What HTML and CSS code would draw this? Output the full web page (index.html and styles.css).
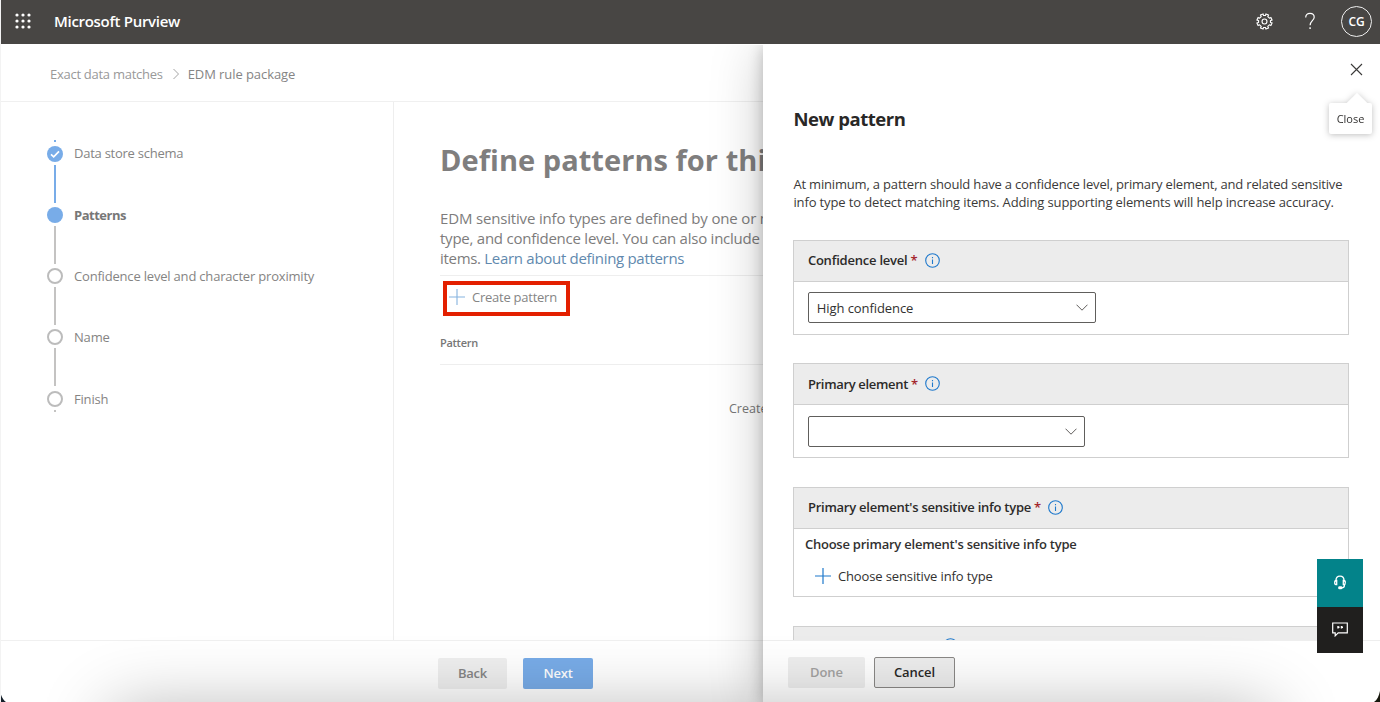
FILE: index.html
```html
<!DOCTYPE html>
<html lang="en">
<head>
<meta charset="utf-8">
<title>Microsoft Purview</title>
<link rel="stylesheet" href="styles.css">
</head>
<body>
<div class="app">
  <header class="topbar">
    <svg class="waffle" width="16" height="16" viewBox="0 0 16 16" fill="#fff"><circle cx="2" cy="2" r="1.6"/><circle cx="8" cy="2" r="1.6"/><circle cx="14" cy="2" r="1.6"/><circle cx="2" cy="8" r="1.6"/><circle cx="8" cy="8" r="1.6"/><circle cx="14" cy="8" r="1.6"/><circle cx="2" cy="14" r="1.6"/><circle cx="8" cy="14" r="1.6"/><circle cx="14" cy="14" r="1.6"/></svg>
    <span class="brand">Microsoft Purview</span>
    <svg class="gear" width="18" height="18" viewBox="0 0 18 18" fill="none" stroke="#fff" stroke-width="1.2" stroke-linejoin="round"><path d="M7.500 1l.5 1.700h2L10.500 1l2.800 1.200-.8 1.600 1.700 1.700 1.600-.8L17 7.500l-1.700.5v2l1.700.5-1.200 2.800-1.600-.8-1.700 1.700.8 1.600L10.500 17l-.5-1.700H8L7.500 17l-2.800-1.200.8-1.600-1.700-1.700-1.600.8L1 10.500 2.700 10V8L1 7.500l1.200-2.800 1.600.8 1.700-1.700-.8-1.600z"/><circle cx="9" cy="9" r="2.600"/></svg>
    <svg class="help" width="12" height="18" viewBox="0 0 12 18" fill="none" stroke="#fff" stroke-width="1.2"><path d="M1.700 5.500C1.700 2.900 3.400 1.300 6 1.300s4.200 1.500 4.200 3.900c0 3.200-4.100 3.900-4.100 8"/><path d="M6.100 15.300v1.700" stroke-width="1.400"/></svg>
    <span class="avatar">CG</span>
  </header>
  <nav class="crumbs">
    <span class="crumb">Exact data matches</span>
    <svg width="8" height="12" viewBox="0 0 8 12" fill="none" stroke="#a5a5a5"><path d="M1.500 1l5 5-5 5"/></svg>
    <span class="current">EDM rule package</span>
  </nav>
  <div class="body">
    <aside class="steps">
      <div class="cap done"></div>
      <div class="step"><span class="dot full"><svg width="16" height="16" viewBox="0 0 16 16" fill="none" stroke="#fff" stroke-width="1.700"><path d="M4 8.300l2.700 2.500L12 5.300"/></svg></span><span class="schema">Data store schema</span></div>
      <div class="line done"></div>
      <div class="step"><span class="dot full"></span><b>Patterns</b></div>
      <div class="line"></div>
      <div class="step"><span class="dot"></span><span>Confidence level and character proximity</span></div>
      <div class="line"></div>
      <div class="step"><span class="dot"></span><span>Name</span></div>
      <div class="line"></div>
      <div class="step"><span class="dot"></span><span>Finish</span></div>
      <div class="cap end"></div>
    </aside>
    <main class="main">
      <h1>Define patterns for this</h1>
      <p class="intro"><span class="i1">EDM sensitive info types are defined by one or more</span><br><span class="i2">type, and confidence level. You can also include</span><br><span class="i3">items. <a>Learn about defining patterns</a></span></p>
      <div class="toolbar"><div class="create"><svg width="16" height="16" viewBox="0 0 16 16" fill="none" stroke="#86b3df" stroke-width="1.100"><path d="M8 0v16M0 8h16"/></svg><span>Create pattern</span></div></div>
      <div class="colhead">Pattern</div>
      <div class="empty">Create</div>
    </main>
  </div>
  <footer class="foot"><span class="btn back">Back</span><span class="btn next">Next</span></footer>

  <section class="drawer">
    <svg class="x" width="13" height="13" viewBox="0 0 13 13" fill="none" stroke="#3b3a39" stroke-width="1.100"><path d="M1 1l11 11M12 1L1 12"/></svg>
    <div class="tip">Close</div>
    <div class="scroll">
      <h2>New pattern</h2>
      <p class="desc"><span class="d1">At minimum, a pattern should have a confidence level, primary element, and related sensitive</span><br><span class="d2">info type to detect matching items. Adding supporting elements will help increase accuracy.</span></p>
      <div class="card">
        <div class="chead"><span class="c1">Confidence level</span><i>*</i><svg class="info" width="15" height="15" viewBox="0 0 15 15" fill="none" stroke="#1f79cc" stroke-width="1.100"><circle cx="7.500" cy="7.500" r="6.800"/><path d="M7.500 6.500v4.500M7.500 4v1.300"/></svg></div>
        <div class="cbody"><div class="select wide"><span>High confidence</span><svg width="12" height="7" viewBox="0 0 12 7" fill="none" stroke="#605e5c"><path d="M.500.700L6 6.200 11.500.700"/></svg></div></div>
      </div>
      <div class="card">
        <div class="chead"><span class="c2">Primary element</span><i>*</i><svg class="info" width="15" height="15" viewBox="0 0 15 15" fill="none" stroke="#1f79cc" stroke-width="1.100"><circle cx="7.500" cy="7.500" r="6.800"/><path d="M7.500 6.500v4.500M7.500 4v1.300"/></svg></div>
        <div class="cbody"><div class="select"><span></span><svg width="12" height="7" viewBox="0 0 12 7" fill="none" stroke="#605e5c"><path d="M.500.700L6 6.200 11.500.700"/></svg></div></div>
      </div>
      <div class="card">
        <div class="chead"><span class="c3">Primary element's sensitive info type</span><i>*</i><svg class="info" width="15" height="15" viewBox="0 0 15 15" fill="none" stroke="#1f79cc" stroke-width="1.100"><circle cx="7.500" cy="7.500" r="6.800"/><path d="M7.500 6.500v4.500M7.500 4v1.300"/></svg></div>
        <div class="choose"><b>Choose primary element's sensitive info type</b><div class="pick"><svg width="16" height="16" viewBox="0 0 16 16" fill="none" stroke="#1f79cc" stroke-width="1.200"><path d="M8 0v16M0 8h16"/></svg><span>Choose sensitive info type</span></div></div>
      </div>
      <div class="card">
        <div class="chead last"><span>Supporting elements</span><svg class="info" width="15" height="15" viewBox="0 0 15 15" fill="none" stroke="#1f79cc" stroke-width="1.100"><circle cx="7.500" cy="7.500" r="6.800"/></svg></div>
      </div>
    </div>
    <div class="actions"><span class="btn off">Done</span><span class="btn cancel">Cancel</span></div>
  </section>
  <div class="shade"></div>
  <div class="dock">
    <div class="support"><svg width="14" height="15" viewBox="0 0 14 15" fill="none" stroke="#fff" stroke-width="1.300"><path d="M3 7V5.500C3 3 4.500 1.200 7 1.200S11 3 11 5.500V7"/><path d="M3.700 5.500v4.200H3C1.800 9.700 1.700 8.800 1.700 7.600S1.900 5.500 3 5.500zM10.300 5.500v4.200h.7c1.200 0 1.300-.9 1.300-2.100S12.100 5.500 11 5.500z"/><path d="M11.500 9.700c0 2-.9 3.200-3 3.200"/><rect x="5.800" y="12" width="3" height="1.700" rx=".8" fill="#fff"/></svg></div>
    <div class="feedback"><svg width="16" height="15" viewBox="0 0 16 15" fill="none" stroke="#fff" stroke-width="1.200"><path d="M.7 1h14.600v9.800H6.200l-3 3v-3H.7z"/><path d="M5.500 5.200h2M9 5.200h2M6 4v2.600M9.500 4v2.600" stroke-width="1.400"/></svg></div>
  </div>
  <svg class="corner left" width="8" height="12" viewBox="0 0 8 12"><path d="M0 1c1 5 3 9 6 11H0z" fill="#15202b"/></svg>
  <svg class="corner right" width="8" height="12" viewBox="0 0 8 12"><path d="M8 1c-1 5-3 9-6 11h6z" fill="#17180d"/></svg>
</div>
</body>
</html>
```
FILE: styles.css
```css
* { box-sizing: border-box; }
body { margin: 0; font-family: "Open Sans", "Noto Sans", sans-serif; font-size: 13px; color: #323130; }
.app { position: relative; width: 1380px; height: 702px; overflow: hidden; background: #fff; display: flex; flex-direction: column; white-space: nowrap; border-left: 1px solid #f3f3f3; }
svg { display: block; flex: none; }
.topbar { height: 44px; margin-left: -1px; flex: none; background: #484644; color: #fff; display: flex; align-items: center; padding: 0 8px 2px 15px; }
.brand { margin-left: 23px; font-size: 15px; font-weight: 600; letter-spacing: -.3px; flex: 1; }
.help { margin-left: 31px; }
.gear { width: 17px; height: 17px; }
.avatar { margin-left: 25px; width: 31px; height: 31px; border: 1px solid #eee; border-radius: 50%; display: flex; align-items: center; justify-content: center; font-size: 12px; font-weight: 600; letter-spacing: -.2px; }
.crumbs { height: 58px; flex: none; border-bottom: 1px solid #f0f0f0; padding: 2px 0 0 49px; display: flex; align-items: center; color: #999; }
.crumb { letter-spacing: -.27px; }
.crumbs svg { margin: 0 8px 0 9px; }
.crumbs .current { color: #858585; letter-spacing: -.07px; }
.body { height: 538px; flex: none; display: flex; }
.steps { width: 393px; border-right: 1px solid #eee; padding: 38px 0 0 46px; color: #858483; letter-spacing: -.19px; }
.step { height: 16px; display: flex; align-items: center; gap: 11px; line-height: 18px; }
.step > :last-child { margin-top: -.4px; }
.step b { color: #777; letter-spacing: -.5px; }
.schema { letter-spacing: -.25px; }
.dot { width: 16px; height: 16px; border-radius: 50%; border: 2px solid #bcbcbc; flex: none; }
.dot.full { background: #78ace8; border: 0; }
.line { width: 2px; height: 38px; background: #c4c3c2; margin: 3px 0 4.3px 7px; }
.line.done, .cap.done { background: #78ace8; }
.cap { width: 2px; height: 2px; margin: 0 0 3.500px 7px; background: #c4c3c2; }
.cap.end { margin-top: 3.500px; }
.main { padding: 38px 0 0 46px; flex: 1; }
h1 { margin: 0; font-size: 29px; line-height: 40px; font-weight: 700; color: #7f7e7e; letter-spacing: .05px; }
.intro { margin: 28px 0 0; font-size: 15px; line-height: 20px; color: #7d7c7c; height: 68px; border-bottom: 1px solid #eee; }
.intro a { color: #6189ae; }
.i1 { letter-spacing: -.17px; }
.i2 { letter-spacing: -.24px; }
.i3 { letter-spacing: -.3px; }
.toolbar { padding: 5px 0 0 3px; }
.create { width: 127px; height: 35px; border: 4px solid #e32000; display: flex; align-items: center; padding: 0 0 3px 2px; gap: 7px; color: #858585; letter-spacing: -.25px; }
.colhead { height: 49px; padding: 18px 0 0; font-size: 11px; line-height: 18px; font-weight: 600; color: #777; border-bottom: 1px solid #eee; letter-spacing: -.3px; }
.empty { padding: 34px 0 0 289px; font-size: 12.500px; line-height: 20px; color: #777; }
.foot { height: 62px; flex: none; border-top: 1px solid #f0f0f0; padding: 17px 0 0 437px; display: flex; gap: 16px; }
.btn { height: 31px; border-radius: 2px; display: flex; align-items: center; justify-content: center; font-size: 13px; font-weight: 600; padding-bottom: 1px; }
.back { width: 69px; background: #efefef; color: #858585; letter-spacing: -.2px; }
.next { width: 70px; background: #78ace8; color: #fff; letter-spacing: -.2px; }
.drawer { position: absolute; left: 762px; top: 45px; width: 617px; height: 657px; background: #fff; box-shadow: 0 6px 50px rgba(0,0,0,.22), 0 2px 14px rgba(0,0,0,.22); clip-path: inset(0 0 0 -80px); display: flex; flex-direction: column; }
.x { position: absolute; right: 17px; top: 18px; }
.tip { position: absolute; right: 8px; top: 58px; width: 43px; height: 31px; background: #fff; border-radius: 2px; display: flex; align-items: center; justify-content: center; font-size: 11px; filter: drop-shadow(0 1px 3px rgba(0,0,0,.25)); }
.tip::before { content: ""; position: absolute; left: 20px; top: -7px; width: 16px; height: 16px; background: #fff; transform: rotate(45deg); }
.scroll { height: 596px; flex: none; overflow: hidden; padding: 60px 31px 0 30.400px; border-bottom: 1px solid #eee; }
h2 { margin: 0; font-size: 18.500px; line-height: 28px; font-weight: 700; color: #292827; letter-spacing: -.45px; }
.desc { margin: 42px 0 27.700px; font-size: 13px; line-height: 18.400px; color: #3b3a39; }
.d1 { letter-spacing: -.18px; }
.d2 { letter-spacing: -.13px; }
.card { border: 1px solid #cfcfcf; margin-bottom: 28.700px; }
.chead { height: 41px; background: #ececec; border-bottom: 1px solid #cfcfcf; padding: 0 0 1px 13.500px; display: flex; align-items: center; font-weight: 600; color: #2b2a29; }
.chead i { font-style: normal; color: #a4262c; margin: 0 7px 0 3px; }
.c1 { letter-spacing: -.22px; }
.c2 { letter-spacing: -.33px; }
.c3 { letter-spacing: -.24px; }
.last { padding-bottom: 2px; }
.last span { letter-spacing: -.2px; }
.last .info { margin-left: 8px; }
.cbody { height: 52px; padding: 10.700px 0 0 13.400px; }
.select { width: 277px; height: 31px; border: 1px solid #605e5c; border-radius: 2px; display: flex; align-items: center; justify-content: space-between; padding: 0 7px 0 8px; letter-spacing: -.08px; }
.select.wide { width: 288px; }
.choose { height: 67px; padding: 6px 0 0 10.500px; line-height: 18px; }
.choose b { font-weight: 600; display: block; letter-spacing: -.23px; }
.pick { display: flex; align-items: center; gap: 7px; padding: 14px 0 0 10px; letter-spacing: -.12px; }
.actions { padding: 16px 0 0 25px; display: flex; gap: 9px; align-items: flex-start; letter-spacing: -.1px; }
.off { width: 77px; background: #eeeeee; color: #a3a2a1; }
.cancel { width: 81px; background: #ededed; border: 1px solid #8a8886; color: #292827; }
.dock { position: absolute; left: 1316px; top: 559px; width: 46px; height: 94px; }
.support, .feedback { display: flex; align-items: center; justify-content: center; height: 48px; padding-bottom: 2px; background: #03838a; }
.feedback { height: 46px; background: #201f1e; }
.shade { position: absolute; left: 120px; top: 720px; width: 1140px; height: 60px; box-shadow: 0 0 70px 10px rgba(0,0,0,.3); pointer-events: none; }
.corner { position: absolute; bottom: 0; }
.corner.left { left: -1px; }
.corner.right { right: 0; }
```
